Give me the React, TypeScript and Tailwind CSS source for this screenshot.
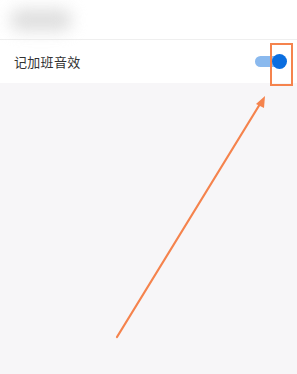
export default function App() {
  return (
    <div className="relative w-[297px] h-[374px] overflow-hidden bg-[#f7f6f8] font-['Noto_Sans_CJK_SC',sans-serif]">
      <header className="h-[40px] bg-white border-b border-[#efefef] flex items-center px-[10px]">
        <div className="w-[62px] h-[22px] rounded-full bg-[#d6d6d6] blur-[8px] opacity-80" />
      </header>
      <div className="h-[43px] bg-white flex items-center justify-between pl-[14px] pr-[10px]">
        <span className="text-[13px] text-[#333] tracking-[0.3px]">记加班音效</span>
        <div className="relative w-[32px] h-[15px] flex items-center">
          <div className="w-[28px] h-[11px] rounded-full bg-[#8ab9ee]" />
          <div className="absolute right-0 w-[15px] h-[15px] rounded-full bg-[#0b6ee0]" />
        </div>
      </div>

      {/* annotation overlay */}
      <div className="absolute left-[270px] top-[43px] w-[23px] h-[43px] border-2 border-[#f5834d]" />
      <svg className="absolute left-0 top-0" width="297" height="374" viewBox="0 0 297 374">
        <line x1="117" y1="337" x2="260" y2="104" stroke="#f5834d" strokeWidth="2.2" strokeLinecap="round" />
        <polygon points="265,96 256,104 264,108" fill="#f5834d" />
      </svg>
    </div>
  );
}
